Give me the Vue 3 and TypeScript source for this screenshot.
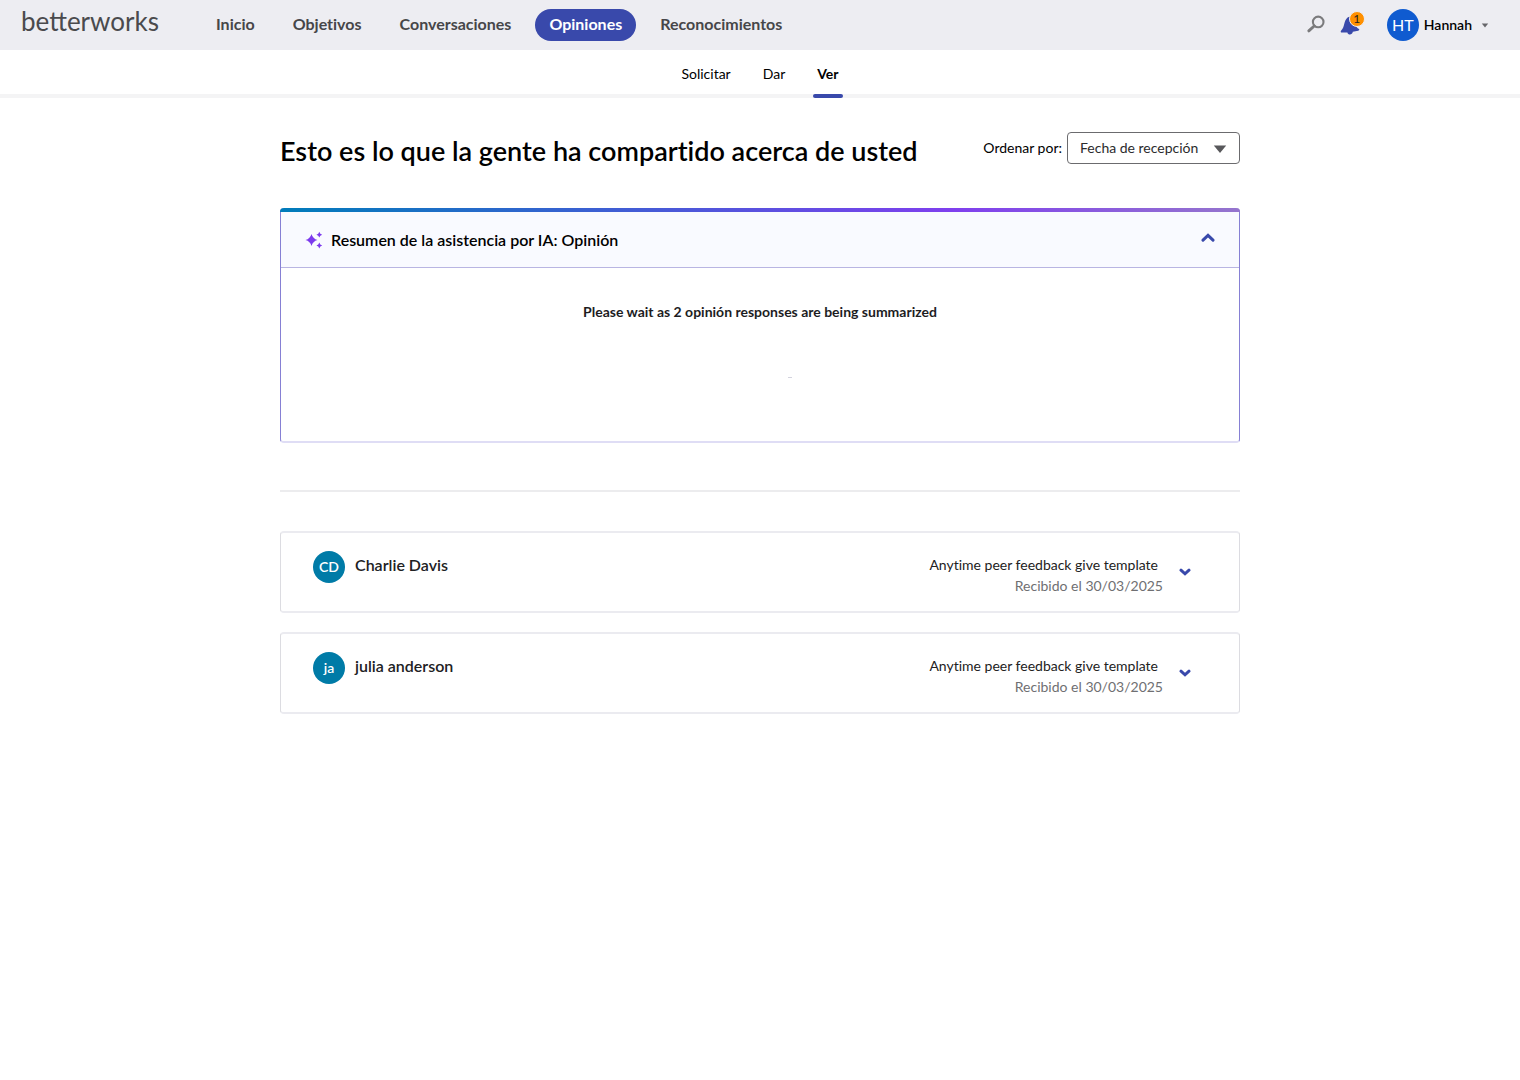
<script setup lang="ts">
import { ref } from 'vue'

interface Feedback {
  initials: string
  name: string
  template: string
  received: string
}

const navItems = ['Inicio', 'Objetivos', 'Conversaciones', 'Opiniones', 'Reconocimientos']
const activeNav = 'Opiniones'
const tabs = ['Solicitar', 'Dar', 'Ver']
const activeTab = 'Ver'
const sortBy = ref('received')
const summaryOpen = ref(true)

const feedback: Feedback[] = [
  { initials: 'CD', name: 'Charlie Davis', template: 'Anytime peer feedback give template', received: 'Recibido el 30/03/2025' },
  { initials: 'ja', name: 'julia anderson', template: 'Anytime peer feedback give template', received: 'Recibido el 30/03/2025' },
]
</script>

<template>
  <div class="page">
    <header class="topbar">
      <a href="#" class="logo">betterworks</a>
      <nav class="nav" aria-label="Principal">
        <a v-for="item in navItems" :key="item" href="#" class="nav-item" :class="{ active: item === activeNav }">{{ item }}</a>
      </nav>
      <div class="tools">
        <button type="button" class="icon-btn" aria-label="Buscar">
          <svg width="20" height="20" viewBox="0 0 20 20" fill="none" stroke="#7b7b7d">
            <circle cx="12.2" cy="6.9" r="5.3" stroke-width="2.1" />
            <path d="M8.2 11 L2.8 15.9" stroke-width="2.9" stroke-linecap="round" />
          </svg>
        </button>
        <button type="button" class="icon-btn bell" aria-label="Notificaciones">
          <svg width="20" height="20" viewBox="0 0 20 20" fill="#3949ab">
            <path d="M7.6 2.4 C9.6 .8 13.6 2 14.6 5.2 C15.4 8.4 15.2 11.8 19 14 C19.6 14.6 19 15.6 18.2 15.8 L12.8 16.8 C12.4 20.2 8 20.4 7.4 17.4 L1.6 17.4 C.6 17.4 .4 16 1.2 15.4 C5 12 3.4 6 7.6 2.4 Z" />
          </svg>
          <span class="badge">1</span>
        </button>
        <button type="button" class="user">
          <span class="avatar avatar-user">HT</span>
          <span class="user-name">Hannah</span>
          <svg width="8" height="5" viewBox="0 0 8 5" fill="#66666a"><path d="M.8 .5 H7.2 L4 4.5 Z" /></svg>
        </button>
      </div>
    </header>

    <nav class="tabs" aria-label="Opiniones">
      <a v-for="tab in tabs" :key="tab" href="#" class="tab" :class="{ active: tab === activeTab }">{{ tab }}</a>
    </nav>

    <main class="content">
      <div class="heading">
        <h1>Esto es lo que la gente ha compartido acerca de usted</h1>
        <div class="sort">
          <label for="sort-by">Ordenar por:</label>
          <div class="select-wrap">
            <select id="sort-by" v-model="sortBy">
              <option value="received">Fecha de recepción</option>
            </select>
            <svg class="select-arrow" width="14" height="8" viewBox="0 0 14 8" fill="#58585b"><path d="M.8 .5 H13.2 L7 8 Z" /></svg>
          </div>
        </div>
      </div>

      <section class="summary">
        <div class="summary-head">
          <svg width="18" height="18" viewBox="0 0 18 18" fill="#7c3aed">
            <path d="M6.5 3 Q7.8 7.7 12.5 9 Q7.8 10.3 6.5 15 Q5.2 10.3 .5 9 Q5.2 7.7 6.5 3 Z" />
            <path d="M14.3 .8 Q14.9 3.1 17.2 3.7 Q14.9 4.3 14.3 6.6 Q13.7 4.3 11.4 3.7 Q13.7 3.1 14.3 .8 Z" />
            <path d="M14.3 11.6 Q14.9 13.9 17.2 14.5 Q14.9 15.1 14.3 17.4 Q13.7 15.1 11.4 14.5 Q13.7 13.9 14.3 11.6 Z" />
          </svg>
          <h2>Resumen de la asistencia por IA: Opinión</h2>
          <button type="button" class="toggle" aria-label="Contraer resumen" :aria-expanded="summaryOpen" @click="summaryOpen = !summaryOpen">
            <svg width="14" height="9" viewBox="0 0 14 9" fill="none" stroke="#3949ab" stroke-width="3"><path d="M2 7.2 L7 2.4 L12 7.2" stroke-linecap="round" /></svg>
          </button>
        </div>
        <div v-if="summaryOpen" class="summary-body">
          <p>Please wait as 2 opinión responses are being summarized</p>
          <svg class="loader" width="64" height="64" viewBox="0 0 64 64" fill="#d3d3de"><rect x="60" y="31" width="4" height="1" /></svg>
        </div>
      </section>

      <hr class="divider" />

      <ul class="list">
        <li v-for="entry in feedback" :key="entry.name" class="card">
          <span class="avatar">{{ entry.initials }}</span>
          <h3>{{ entry.name }}</h3>
          <div class="meta">
            <span class="template">{{ entry.template }}</span>
            <span class="received">{{ entry.received }}</span>
          </div>
          <button type="button" class="toggle" :aria-label="`Expandir opinión de ${entry.name}`">
            <svg width="12" height="8" viewBox="0 0 12 8" fill="none" stroke="#3949ab" stroke-width="3"><path d="M2 2.2 L6 5.8 L10 2.2" stroke-linecap="round" /></svg>
          </button>
        </li>
      </ul>
    </main>
  </div>
</template>

<style>
body {
  margin: 0;
  background: #fff;
}
</style>

<style scoped>
.page {
  font-family: Lato, "Open Sans", sans-serif;
  font-size: 14px;
  line-height: 20px;
  font-variant-ligatures: none;
  color: #000;
}

a {
  color: inherit;
  text-decoration: none;
}

button {
  font: inherit;
  color: inherit;
  background: none;
  border: 0;
  padding: 0;
  cursor: pointer;
}

svg {
  display: block;
  flex: none;
}

h1,
h2,
h3,
p {
  margin: 0;
}

.topbar {
  display: flex;
  align-items: center;
  height: 50px;
  padding: 0 31px 0 21px;
  background: #ededf2;
}

.logo {
  width: 181px;
  padding-bottom: 8px;
  font-size: 26px;
  line-height: 32px;
  font-weight: 400;
  font-variant-ligatures: normal;
  color: #4a4a4d;
}

.nav {
  display: flex;
  gap: 10px;
}

.nav-item {
  padding: 0 14px 2px;
  border-radius: 16px;
  font-size: 16px;
  line-height: 30px;
  font-weight: 700;
  color: #464649;
}

.nav-item.active {
  color: #fff;
  background: #3949ab;
}

.tools {
  display: flex;
  align-items: center;
  margin-left: auto;
}

.icon-btn {
  position: relative;
  margin-right: 14px;
}

.bell {
  margin-right: 27px;
}

.badge {
  position: absolute;
  top: -4px;
  right: -5px;
  width: 14px;
  height: 14px;
  border: 1px solid #ededf2;
  border-radius: 50%;
  background: #ff9000;
  font-size: 12px;
  line-height: 14px;
  color: #222;
}

.user {
  display: flex;
  align-items: center;
}

.avatar {
  flex: none;
  width: 32px;
  height: 32px;
  border-radius: 50%;
  background: #007ba7;
  color: #fff;
  font-size: 14px;
  line-height: 32px;
  font-weight: 600;
  text-align: center;
}

.avatar-user {
  background: #0f5bd0;
  font-size: 16px;
  font-weight: 400;
}

.user-name {
  margin: 0 9px 0 5px;
  font-weight: 600;
}

.tabs {
  display: flex;
  justify-content: center;
  gap: 24px;
  height: 44px;
  border-bottom: 4px solid #f4f4f5;
}

.tab {
  position: relative;
  padding: 0 4px;
  line-height: 48px;
}

.tab.active {
  font-weight: 700;
}

.tab.active::after {
  content: "";
  position: absolute;
  left: 0;
  right: 0;
  top: 44px;
  height: 4px;
  border-radius: 2px;
  background: #3949ab;
}

.content {
  max-width: 960px;
  margin: 0 auto;
  padding: 34px 24px 48px;
}

.heading {
  display: flex;
  justify-content: space-between;
  align-items: flex-start;
  margin-bottom: 38px;
}

h1 {
  font-size: 27px;
  line-height: 38px;
  font-weight: 600;
}

.sort {
  display: flex;
  align-items: center;
  gap: 5px;
}

.select-wrap {
  position: relative;
}

select {
  appearance: none;
  display: block;
  box-sizing: border-box;
  width: 173px;
  height: 32px;
  padding: 0 36px 0 12px;
  border: 1px solid #6b6b6e;
  border-radius: 4px;
  background: #fff;
  font: inherit;
  color: #2b2b2d;
}

.select-arrow {
  position: absolute;
  top: 13px;
  right: 13px;
  pointer-events: none;
}

.summary {
  border: 1px solid #8680d4;
  border-top: 0;
  border-bottom: 2px solid #dfddf5;
  border-radius: 4px;
}

.summary::before {
  content: "";
  display: block;
  height: 4px;
  margin: 0 -1px;
  border-radius: 4px 4px 0 0;
  background: linear-gradient(90deg, #007cba, #7f3fee 70%, #9575cd);
}

.summary-head {
  display: flex;
  align-items: center;
  gap: 8px;
  height: 55px;
  padding: 0 24px;
  border-bottom: 1px solid #b9b5e2;
  background: #f9faff;
}

.summary-head .toggle {
  margin: 0 0 4px auto;
}

h2,
h3 {
  font-size: 16px;
  line-height: 24px;
  font-weight: 600;
}

.summary-body {
  display: flex;
  flex-direction: column;
  align-items: center;
  gap: 24px;
  padding: 34px 24px 31px;
}

.summary-body p {
  font-weight: 700;
  color: #1d1d1f;
}

.divider {
  height: 2px;
  margin: 47px 0 39px;
  border: 0;
  background: #ececee;
}

.list {
  display: flex;
  flex-direction: column;
  gap: 19px;
  margin: 0;
  padding: 0;
  list-style: none;
}

.card {
  display: flex;
  align-items: flex-start;
  padding: 18px 48px 15px 32px;
  border: 1px solid #dcdce1;
  border-width: 2px 1px;
  border-color: #ebebf0 #dcdce1;
  border-radius: 4px;
}

h3 {
  margin: 2px 0 0 10px;
  color: #212123;
}

.meta {
  display: flex;
  flex-direction: column;
  align-items: flex-end;
  margin: 3px 16px 0 auto;
  line-height: 21px;
}

.template {
  margin-right: 5px;
  color: #222;
}

.received {
  color: #6f6f72;
}

.card .toggle {
  margin-top: 17px;
}
</style>
